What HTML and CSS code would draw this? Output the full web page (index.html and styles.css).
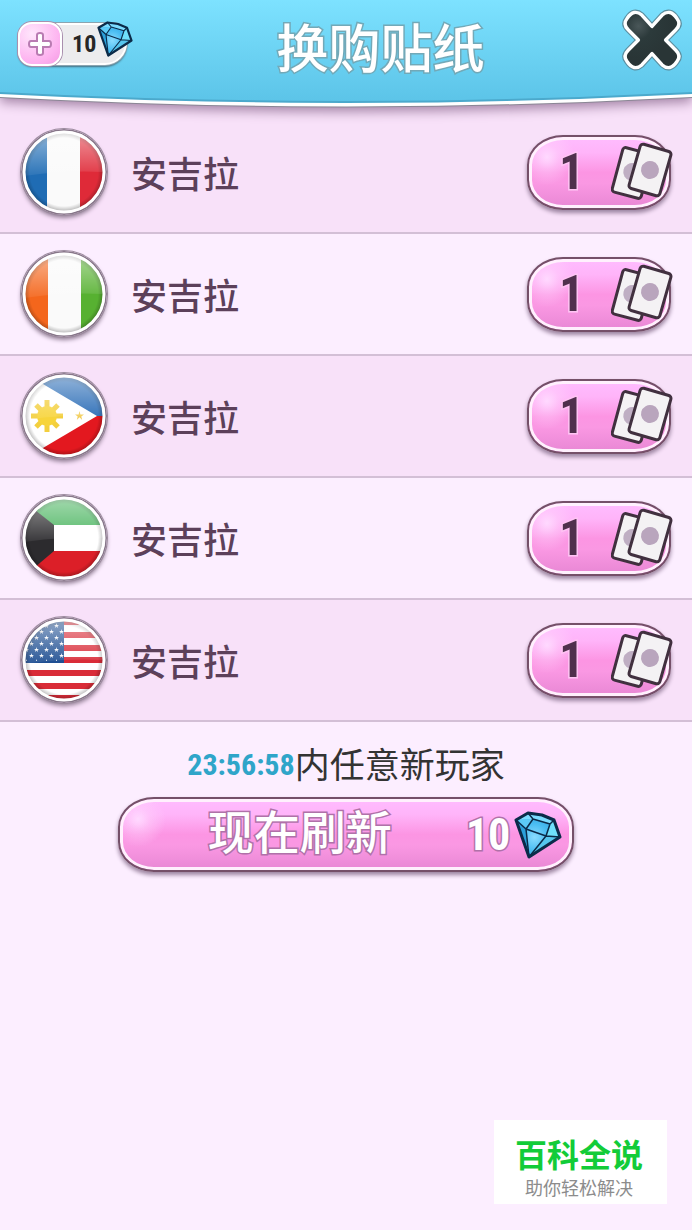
FILE: index.html
```html
<!DOCTYPE html>
<html lang="zh-CN">
<head>
<meta charset="utf-8">
<meta name="viewport" content="width=device-width, initial-scale=1">
<title>换购贴纸</title>
<link rel="stylesheet" href="styles.css">
</head>
<body>
<svg class="defs" width="0" height="0" aria-hidden="true">
  <defs>
    <linearGradient id="sky" x1="0" y1="0" x2="0" y2="1">
      <stop offset="0" stop-color="#7de2ff"/><stop offset="1" stop-color="#5cc4e8"/>
    </linearGradient>
    <radialGradient id="gem" cx=".42" cy=".55" r=".6">
      <stop offset="0" stop-color="#8adcff"/><stop offset=".5" stop-color="#4abdf2"/><stop offset="1" stop-color="#2c9cd8"/>
    </radialGradient>
    <linearGradient id="gloss" x1="0" y1="0" x2="0" y2="1">
      <stop offset="0" stop-color="#fff" stop-opacity=".5"/><stop offset="1" stop-color="#fff" stop-opacity=".06"/>
    </linearGradient>
    <radialGradient id="edge">
      <stop offset=".85" stop-color="#000" stop-opacity="0"/><stop offset="1" stop-color="#000" stop-opacity=".3"/>
    </radialGradient>
    <radialGradient id="coal" cx=".25" cy=".25" r=".6">
      <stop offset="0" stop-color="#4a5759"/><stop offset=".4" stop-color="#2c3a3b"/><stop offset="1" stop-color="#293536"/>
    </radialGradient>
    <clipPath id="disc"><circle cx="43" cy="43" r="40"/></clipPath>
    <symbol id="diamond" viewBox="0 0 48 48">
      <path d="M2 9 14 2 28 4 40 9 46 26 15 46Z" fill="url(#gem)"/>
      <path d="M2 9 14 2 28 4 40 9 36 13 19 8Z" fill="#7cdcff"/>
      <path d="M2 9 19 8 12 18Z" fill="#5ccbf7"/>
      <path d="M36 13 40 9 46 26 32 25Z" fill="#6fe0fb"/>
      <path d="M2 9 12 18 15 46Z" fill="#2ba0da"/>
      <path d="M32 25 46 26 15 46Z" fill="#56c6ee"/>
      <path d="M12 18 32 25 46 26M2 9 12 18 19 8 36 13 32 25 15 46 12 18M14 2 19 8M36 13 40 9" fill="none" stroke="#0b2b49" stroke-width="1.5" stroke-linejoin="round"/>
      <path d="M2 9 14 2 28 4 40 9 46 26 15 46Z" fill="none" stroke="#0b2b49" stroke-width="3" stroke-linejoin="round"/>
    </symbol>
    <symbol id="cards" viewBox="0 0 64 62">
      <g stroke="#41303f" stroke-width="3">
        <g transform="rotate(15 21 32)"><rect x="6" y="9" width="30" height="46" rx="3" fill="#f4f2f4"/><circle cx="21" cy="31" r="9" fill="#bfaec3" stroke="none"/></g>
        <g transform="rotate(16 39 29)"><rect x="23" y="6" width="32" height="46" rx="3" fill="#f4f2f4"/><circle cx="39" cy="29" r="9" fill="#b9a5bd" stroke="none"/></g>
      </g>
    </symbol>
    <symbol id="rim" viewBox="0 0 86 86">
      <circle cx="43" cy="43" r="40" fill="url(#edge)"/>
      <path d="M3 43A40 40 0 0 1 83 43Q63 42 43 43T3 47Z" fill="url(#gloss)"/>
      <circle cx="43" cy="43" r="42" fill="none" stroke="#877689" stroke-width="2"/>
      <circle cx="43" cy="43" r="40" fill="none" stroke="#fff" stroke-width="3"/>
    </symbol>
    <symbol id="star" viewBox="0 0 10 10"><path d="M5 0 6 4 10 4 7 6 8 10 5 7 2 10 3 6 0 4 4 4Z"/></symbol>
    <pattern id="stars" x="3" y="5" width="10" height="12" patternUnits="userSpaceOnUse">
      <use href="#star" x="0" y="1" width="5" height="5" fill="#fff"/>
      <use href="#star" x="5" y="7" width="5" height="5" fill="#fff"/>
    </pattern>
  </defs>
</svg>

<header class="header">
  <svg class="header-bg" viewBox="0 0 692 124" preserveAspectRatio="none" aria-hidden="true">
    <path d="M0 0H692V98Q346 117 0 98Z" fill="#8b8795"/>
    <path d="M0 0H692V97Q346 116 0 97Z" fill="#fff"/>
    <path d="M0 0H692V94Q346 112 0 94Z" fill="#4ba9cc"/>
    <path d="M0 0H692V92Q346 110 0 92Z" fill="url(#sky)"/>
  </svg>
  <div class="wallet">
    <button class="wallet-add" aria-label="充值">
      <svg viewBox="0 0 24 24" aria-hidden="true"><path d="M9 3Q9 1 12 1T15 3V9H21Q23 9 23 12T21 15H15V21Q15 23 12 23T9 21V15H3Q1 15 1 12T3 9H9Z" fill="#fff" stroke="#b97bb2" stroke-width="2"/></svg>
    </button>
    <span class="wallet-count">10</span>
    <svg class="wallet-gem" aria-hidden="true"><use href="#diamond"/></svg>
  </div>
  <h1 class="title">换购贴纸</h1>
  <button class="close" aria-label="关闭">
    <svg viewBox="2 1 56 60" aria-hidden="true">
      <g stroke-linejoin="round">
        <path d="M8 12Q14 3 21 9L30 19 39 9Q46 3 52 12 56 17 51 22L42 31 51 40Q56 45 52 50 46 59 39 53L30 43 21 53Q14 59 8 50 4 45 9 40L18 31 9 22Q4 17 8 12Z" fill="none" stroke="#5b8d9e" stroke-width="5"/>
        <path d="M8 12Q14 3 21 9L30 19 39 9Q46 3 52 12 56 17 51 22L42 31 51 40Q56 45 52 50 46 59 39 53L30 43 21 53Q14 59 8 50 4 45 9 40L18 31 9 22Q4 17 8 12Z" fill="url(#coal)" stroke="#fff" stroke-width="3"/>
      </g>
    </svg>
  </button>
</header>

<main>
  <ul class="players">
    <li class="player">
      <svg class="flag" viewBox="0 0 86 86" role="img" aria-label="法国">
        <g clip-path="url(#disc)"><path fill="#fafafa" d="M0 0H86V86H0Z"/><path fill="#1f6cb4" d="M0 0H26V86H0Z"/><path fill="#df2a38" d="M59 0H86V86H59Z"/></g><use href="#rim"/>
      </svg>
      <span class="name">安吉拉</span>
      <button class="candy swap"><span class="swap-count">1</span><svg class="swap-cards" aria-hidden="true"><use href="#cards"/></svg></button>
    </li>
    <li class="player">
      <svg class="flag" viewBox="0 0 86 86" role="img" aria-label="科特迪瓦">
        <g clip-path="url(#disc)"><path fill="#fafafa" d="M0 0H86V86H0Z"/><path fill="#f4661c" d="M0 0H27V86H0Z"/><path fill="#57b131" d="M60 0H86V86H60Z"/></g><use href="#rim"/>
      </svg>
      <span class="name">安吉拉</span>
      <button class="candy swap"><span class="swap-count">1</span><svg class="swap-cards" aria-hidden="true"><use href="#cards"/></svg></button>
    </li>
    <li class="player">
      <svg class="flag" viewBox="0 0 86 86" role="img" aria-label="菲律宾">
        <g clip-path="url(#disc)">
          <path fill="#2468b4" d="M0 0H86V43H0Z"/><path fill="#e3181f" d="M0 43H86V86H0Z"/><path fill="#fff" d="M0 -2 76 43 0 88Z"/>
          <g stroke="#f3cf3e" stroke-width="5"><path d="M26 27V59M10 43H42M15 32 37 54M37 32 15 54"/></g>
          <circle cx="26" cy="43" r="10" fill="#f7d43b"/><use href="#star" x="54" y="38" width="9" height="9" fill="#f3cf5c"/>
        </g><use href="#rim"/>
      </svg>
      <span class="name">安吉拉</span>
      <button class="candy swap"><span class="swap-count">1</span><svg class="swap-cards" aria-hidden="true"><use href="#cards"/></svg></button>
    </li>
    <li class="player">
      <svg class="flag" viewBox="0 0 86 86" role="img" aria-label="科威特">
        <g clip-path="url(#disc)"><path fill="#fff" d="M0 0H86V86H0Z"/><path fill="#46b35c" d="M0 0H86V30H0Z"/><path fill="#dc1f28" d="M0 56H86V86H0Z"/><path fill="#2c2b2e" d="M0 4 33 30V56L0 84Z"/></g><use href="#rim"/>
      </svg>
      <span class="name">安吉拉</span>
      <button class="candy swap"><span class="swap-count">1</span><svg class="swap-cards" aria-hidden="true"><use href="#cards"/></svg></button>
    </li>
    <li class="player">
      <svg class="flag" viewBox="0 0 86 86" role="img" aria-label="美国">
        <g clip-path="url(#disc)">
          <path fill="#fff" d="M0 0H86V86H0Z"/>
          <path stroke="#d92c38" stroke-width="6" d="M0 5H86M0 18H86M0 31H86M0 43H86M0 56H86M0 69H86M0 81H86"/>
          <path fill="#1f4f92" d="M0 0H43V46H0Z"/><path fill="url(#stars)" d="M3 5H43V44H3Z"/>
        </g><use href="#rim"/>
      </svg>
      <span class="name">安吉拉</span>
      <button class="candy swap"><span class="swap-count">1</span><svg class="swap-cards" aria-hidden="true"><use href="#cards"/></svg></button>
    </li>
  </ul>

  <section class="refresh">
    <p class="timer"><time class="clock">23:56:58</time><span>内任意新玩家</span></p>
    <button class="candy refresh-now">
      <span class="refresh-label">现在刷新</span>
      <span class="refresh-price">10</span>
      <svg class="refresh-gem" aria-hidden="true"><use href="#diamond"/></svg>
    </button>
  </section>
</main>

<aside class="badge">
  <strong class="badge-name">百科全说</strong>
  <span class="badge-line">助你轻松解决</span>
</aside>
</body>
</html>
```

FILE: styles.css
```css
*, *::before { box-sizing: border-box; }

body {
  position: relative;
  min-height: 100vh;
  margin: 0;
  background: #fceeff;
  color: #333;
  font-family: "Noto Sans CJK SC", sans-serif;
}

button {
  margin: 0;
  padding: 0;
  border: 0;
  background: none;
  color: inherit;
  font: inherit;
  cursor: pointer;
}

.defs { position: absolute; }

/* Header */
.header {
  position: relative;
  z-index: 1;
  display: flex;
  align-items: center;
  justify-content: space-between;
  height: 112px;
  padding: 0 8px 24px 18px;
  background: #f8e1f9;
}

.header-bg {
  position: absolute;
  z-index: -1;
  inset: 0;
  width: 100%;
  height: 124px;
  filter: drop-shadow(0 4px 6px #a283a5);
}

.wallet {
  position: relative;
  display: flex;
  align-items: center;
  width: 109px;
  height: 42px;
  margin-right: 14px;
  border: 2px solid #fff;
  border-radius: 14px 14px 22px 14px;
  background: #ececee;
  box-shadow: 0 0 0 1px #8ba4b0, 0 2px 2px #456d7e;
}

.wallet-add {
  display: grid;
  place-items: center;
  flex: none;
  width: 44px;
  height: 44px;
  margin-left: -2px;
  border: 2px solid #fff;
  border-radius: 14px;
  background: radial-gradient(circle at 30% 25%, #ffe6fc, #fdb0ef 70%, #f39be2);
  box-shadow: 0 0 0 1px #a98fae;
}

.wallet-add svg { width: 24px; height: 24px; }

.wallet-count {
  margin-left: 10px;
  color: #262626;
  font: bold 24px/40px "Roboto Condensed", "Liberation Sans Narrow", "Liberation Sans", sans-serif;
}

.wallet-gem {
  position: absolute;
  top: -4px;
  right: -8px;
  width: 36px;
  height: 36px;
}

.title {
  margin: 4px 0 0;
  color: #fff;
  font-size: 52px;
  font-weight: 500;
  line-height: 60px;
  paint-order: stroke fill;
  -webkit-text-stroke: 3px #72a9b8;
}

.close {
  width: 64px;
  height: 68px;
  margin-bottom: 8px;
}

.close svg { display: block; width: 100%; height: 100%; }

/* Glossy pink buttons */
.candy {
  position: relative;
  display: flex;
  align-items: center;
  height: 75px;
  border: 2px solid #755069;
  border-radius: 36px / 30px;
  background:
    radial-gradient(circle at 18px 20px, #ffd9ff 0, #ffd0fc88 12px, transparent 28px),
    linear-gradient(#ffbcff 0, #ffb4f9 22%, #fc95e3 50%, #fa98e3 65%, #e887d4 100%);
  box-shadow: inset 0 0 0 3px #fff0fd, 0 3px 4px #9b84a0;
}

/* Player list */
.players {
  margin: 0;
  padding: 0;
  list-style: none;
}

.player {
  display: flex;
  align-items: center;
  gap: 24px;
  height: 122px;
  padding: 0 21px;
  border-bottom: 2px solid #d3bfd6;
}

.player:nth-child(odd) { background: #f8e1f9; }

.flag {
  flex: none;
  width: 86px;
  height: 86px;
  border-radius: 50%;
  box-shadow: 0 0 0 1px #9c8b9e, 0 3px 4px #927f95;
}

.name {
  flex: 1;
  color: #5c405a;
  font-size: 36px;
  font-weight: 500;
  line-height: 48px;
}

.swap {
  width: 144px;
  padding-left: 30px;
}

.swap-count {
  color: #50304d;
  font: bold 50px/60px "Roboto Condensed", "Liberation Sans Narrow", "Liberation Sans", sans-serif;
  paint-order: stroke fill;
  -webkit-text-stroke: 3px #ffc4f4;
}

.swap-cards {
  position: absolute;
  top: 4px;
  right: -6px;
  width: 64px;
  height: 62px;
}

/* Refresh */
.refresh {
  display: flex;
  flex-direction: column;
  align-items: center;
  gap: 11px;
  padding-top: 18px;
}

.timer {
  display: flex;
  align-items: center;
  margin: 0;
  font-size: 35px;
  line-height: 46px;
}

.clock {
  padding-top: 4px;
  color: #2fa5c9;
  font: bold 30px/42px "Roboto Condensed", "Liberation Sans Narrow", "Liberation Sans", sans-serif;
}

.refresh-now {
  width: 66%;
  padding: 0 10px 0 88px;
  color: #fff;
}

.refresh-label, .refresh-price {
  paint-order: stroke fill;
  -webkit-text-stroke: 3px #b071a9;
}

.refresh-label {
  margin-right: auto;
  padding-bottom: 12px;
  font-size: 46px;
  font-weight: 500;
  line-height: 52px;
}

.refresh-price {
  margin-right: 4px;
  font: bold 44px/60px "Roboto Condensed", "Liberation Sans Narrow", "Liberation Sans", sans-serif;
}

.refresh-gem { width: 48px; height: 48px; }

/* Corner badge */
.badge {
  position: absolute;
  right: 25px;
  bottom: 26px;
  display: flex;
  flex-direction: column;
  align-items: center;
  padding: 11px 24px 5px 21px;
  background: #fff;
}

.badge-name {
  color: #12cc38;
  font-size: 32px;
  font-weight: 700;
  line-height: 44px;
}

.badge-line {
  color: #8c8c8c;
  font-size: 18px;
  line-height: 24px;
}
```
